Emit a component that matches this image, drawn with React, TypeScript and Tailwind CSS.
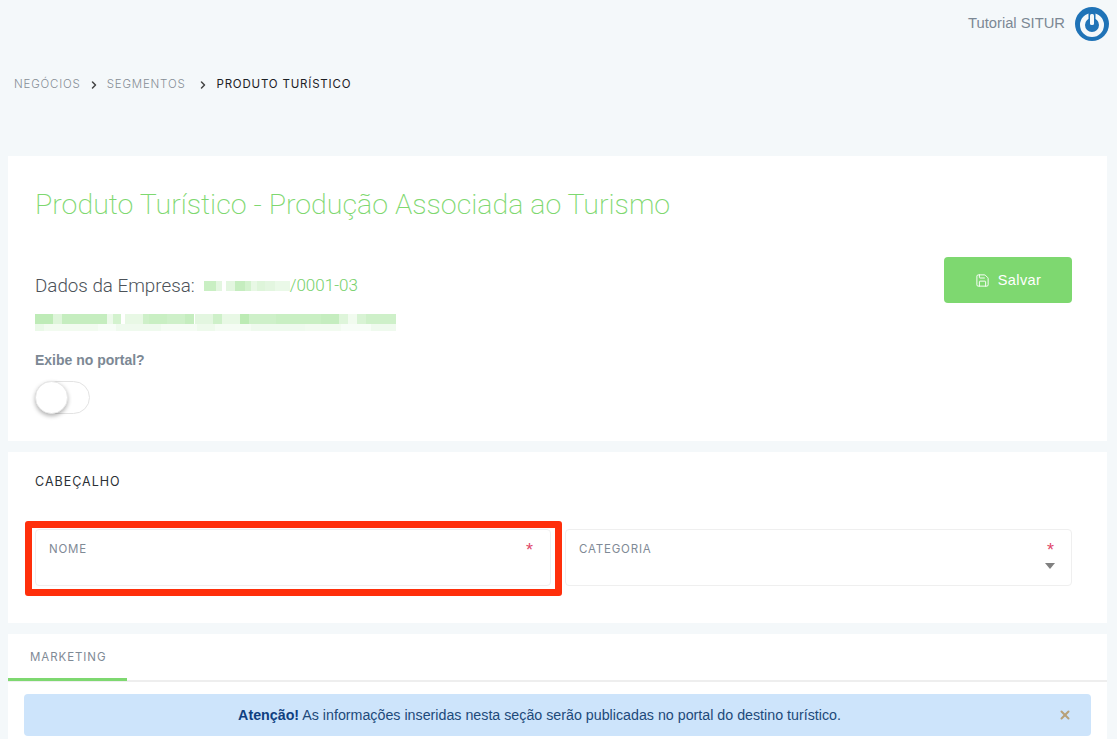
import { Save, ChevronRight, X } from "lucide-react";

const mont = "font-['Inter',sans-serif]";

// censored text in the reference: [x, width, opacity] cells of a mosaic
const CNPJ_CELLS = [
  [0, 12, 0.42], [12, 6, 0.22], [22, 9, 0.22], [31, 10, 0.45], [41, 6, 0.34], [47, 6, 0.18], [53, 8, 0.26], [61, 10, 0.22], [71, 15, 0.16],
];
const NAME_TOP = [
  [0, 18, 0.5], [18, 9, 0.26], [27, 45, 0.45], [72, 6, 0.15], [78, 8, 0.34], [90, 18, 0.18], [108, 6, 0.38], [114, 18, 0.42], [132, 18, 0.38], [150, 9, 0.45], [160, 18, 0.22], [178, 9, 0.38], [187, 18, 0.18], [205, 9, 0.52], [214, 27, 0.38], [241, 18, 0.42], [259, 27, 0.42], [286, 18, 0.45], [304, 9, 0.26], [313, 9, 0.11], [322, 9, 0.3], [331, 30, 0.38],
];
const NAME_BOTTOM = [
  [0, 9, 0.16], [9, 54, 0.1], [63, 18, 0.06], [81, 45, 0.12], [126, 36, 0.08], [162, 18, 0.13], [180, 36, 0.08], [216, 54, 0.12], [270, 36, 0.1], [306, 30, 0.06], [336, 25, 0.12],
];

function Mosaic({ width, rows }: { width: number; rows: { y: number; h: number; cells: number[][] }[] }) {
  const height = Math.max(...rows.map((r) => r.y + r.h));
  return (
    <svg width={width} height={height} className="block shrink-0">
      {rows.map((r) =>
        r.cells.map(([x, w, o]) => <rect key={`${r.y}-${x}`} x={x} y={r.y} width={w} height={r.h} fill="#7ed870" opacity={o} />),
      )}
    </svg>
  );
}

function PowerLogo() {
  return (
    <svg width="34" height="34" viewBox="0 0 34 34" className="block">
      <circle cx="17" cy="17" r="17" fill="#1f73b7" />
      <circle cx="17" cy="18" r="9.5" fill="none" stroke="#f4f8fa" strokeWidth="5" />
      <rect x="13.5" y="5" width="7" height="10" fill="#1f73b7" />
      <rect x="15" y="7" width="4" height="11" rx="1.5" fill="#f4f8fa" />
    </svg>
  );
}

function Field({ label, select }: { label: string; select?: boolean }) {
  return (
    <div className="relative h-[57px] w-full rounded-sm border border-[#efefef] bg-white px-[13px] pt-3">
      <span className={`${mont} block text-[11.5px] leading-[14px] tracking-[0.07em] text-[#7f8a96]`}>{label}</span>
      <span className="absolute right-[17px] top-[10px] font-['Liberation_Sans',sans-serif] text-[18px] leading-[20px] text-[#e0486a]">*</span>
      {select && <span className="absolute right-4 top-[33px] h-0 w-0 border-x-[5px] border-t-[6px] border-x-transparent border-t-[#808080]" />}
    </div>
  );
}

export default function App() {
  return (
    <div className="h-[739px] overflow-hidden bg-[#f4f8fa] font-['Liberation_Sans',sans-serif]">
      <header className="flex h-[46px] items-center justify-end gap-[10px] pr-2 pt-[1px]">
        <span className="text-[14.75px] text-[#7c8894]">Tutorial SITUR</span>
        <PowerLogo />
      </header>

      <nav className={`${mont} ml-[14px] mt-[31px] flex h-[16px] items-center text-[11.5px] tracking-[0.07em]`}>
        <span className="font-light text-[#868e96]">NEGÓCIOS</span>
        <ChevronRight size={12} strokeWidth={3} className="ml-[7px] text-[#444]" />
        <span className="ml-[7px] font-light text-[#868e96]">SEGMENTOS</span>
        <ChevronRight size={12} strokeWidth={3} className="ml-[11px] text-[#444]" />
        <span className="ml-[8px] text-[#1d2126]">PRODUTO TURÍSTICO</span>
      </nav>

      <main className="mx-2 mt-[63px] flex w-[1099px] flex-col gap-[11px]">
        <section className="relative h-[285px] bg-white px-[27px] pt-[32px]">
          <h1 className="font-['Roboto',sans-serif] text-[28.55px] font-extralight leading-[34px] text-[#7ed870]">
            Produto Turístico - Produção Associada ao Turismo
          </h1>
          <div className="mt-[53px] flex h-[22px] items-center font-['Roboto',sans-serif] text-[18.8px] font-light text-[#4c5259]">
            <span>Dados da Empresa:</span>
            <span className="ml-[9px]">
              <Mosaic width={86} rows={[{ y: 0, h: 10, cells: CNPJ_CELLS }]} />
            </span>
            <span className="text-[17px] text-[#77d16c]">/0001-03</span>
          </div>
          <div className="mt-[17px]">
            <Mosaic
              width={361}
              rows={[
                { y: 0, h: 10, cells: NAME_TOP },
                { y: 10, h: 7, cells: NAME_BOTTOM },
              ]}
            />
          </div>
          <p className="mt-[21px] text-[14px] font-bold leading-[16px] text-[#7c8894]">Exibe no portal?</p>
          <div className="relative mt-[13px] h-[33px] w-[55px] rounded-full border border-[#e3e3e3] bg-white">
            <span className="absolute -left-px -top-px h-[33px] w-[33px] rounded-full border border-[#e8e8e8] bg-white shadow-[0_2px_4px_rgba(0,0,0,0.3)]" />
          </div>
          <button className="absolute right-[35px] top-[101px] flex h-[46px] w-[128px] items-center justify-center gap-[8px] rounded-sm bg-[#7ed870] pt-px text-[14.5px] tracking-[0.03em] text-white">
            <Save size={15} strokeWidth={1.5} />
            Salvar
          </button>
        </section>

        <section className="h-[171px] bg-white px-[27px] pt-[22px]">
          <h2 className={`${mont} text-[12.5px] leading-[15px] tracking-[0.08em] text-[#2a2f35]`}>CABEÇALHO</h2>
          <div className="mt-[40px] flex gap-[14px] pr-[8px]">
            <div className="relative w-[516px] shrink-0">
              <Field label="NOME" />
              <div className="pointer-events-none absolute -bottom-[10px] -left-[10px] -right-[11px] -top-[8px] rounded-[3px] border-[7px] border-[#ff2f0b]" />
            </div>
            <div className="flex-1">
              <Field label="CATEGORIA" select />
            </div>
          </div>
        </section>

        <section className="h-[120px] bg-white">
          <div className="relative h-[48px] border-b-2 border-[#eeeeee]">
            <span className={`${mont} absolute left-[22px] top-[16px] text-[11.5px] leading-[14px] tracking-[0.08em] text-[#7f8a96]`}>MARKETING</span>
            <span className="absolute -bottom-[1px] left-0 h-[3px] w-[119px] bg-[#7ed870]" />
          </div>
          <div className="relative mx-[16px] mt-[12px] flex h-[42px] items-center justify-center rounded-[4px] bg-[#cde4fb] pr-[36px] pt-[2px] text-[14.25px] text-[#1d4a7a]">
            <span>
              <b className="text-[#0f3f80]">Atenção!</b> As informações inseridas nesta seção serão publicadas no portal do destino turístico.
            </span>
            <X size={14} strokeWidth={3.5} className="absolute right-[19px] top-[14px] text-[#b8a178]" />
          </div>
        </section>
      </main>
    </div>
  );
}
